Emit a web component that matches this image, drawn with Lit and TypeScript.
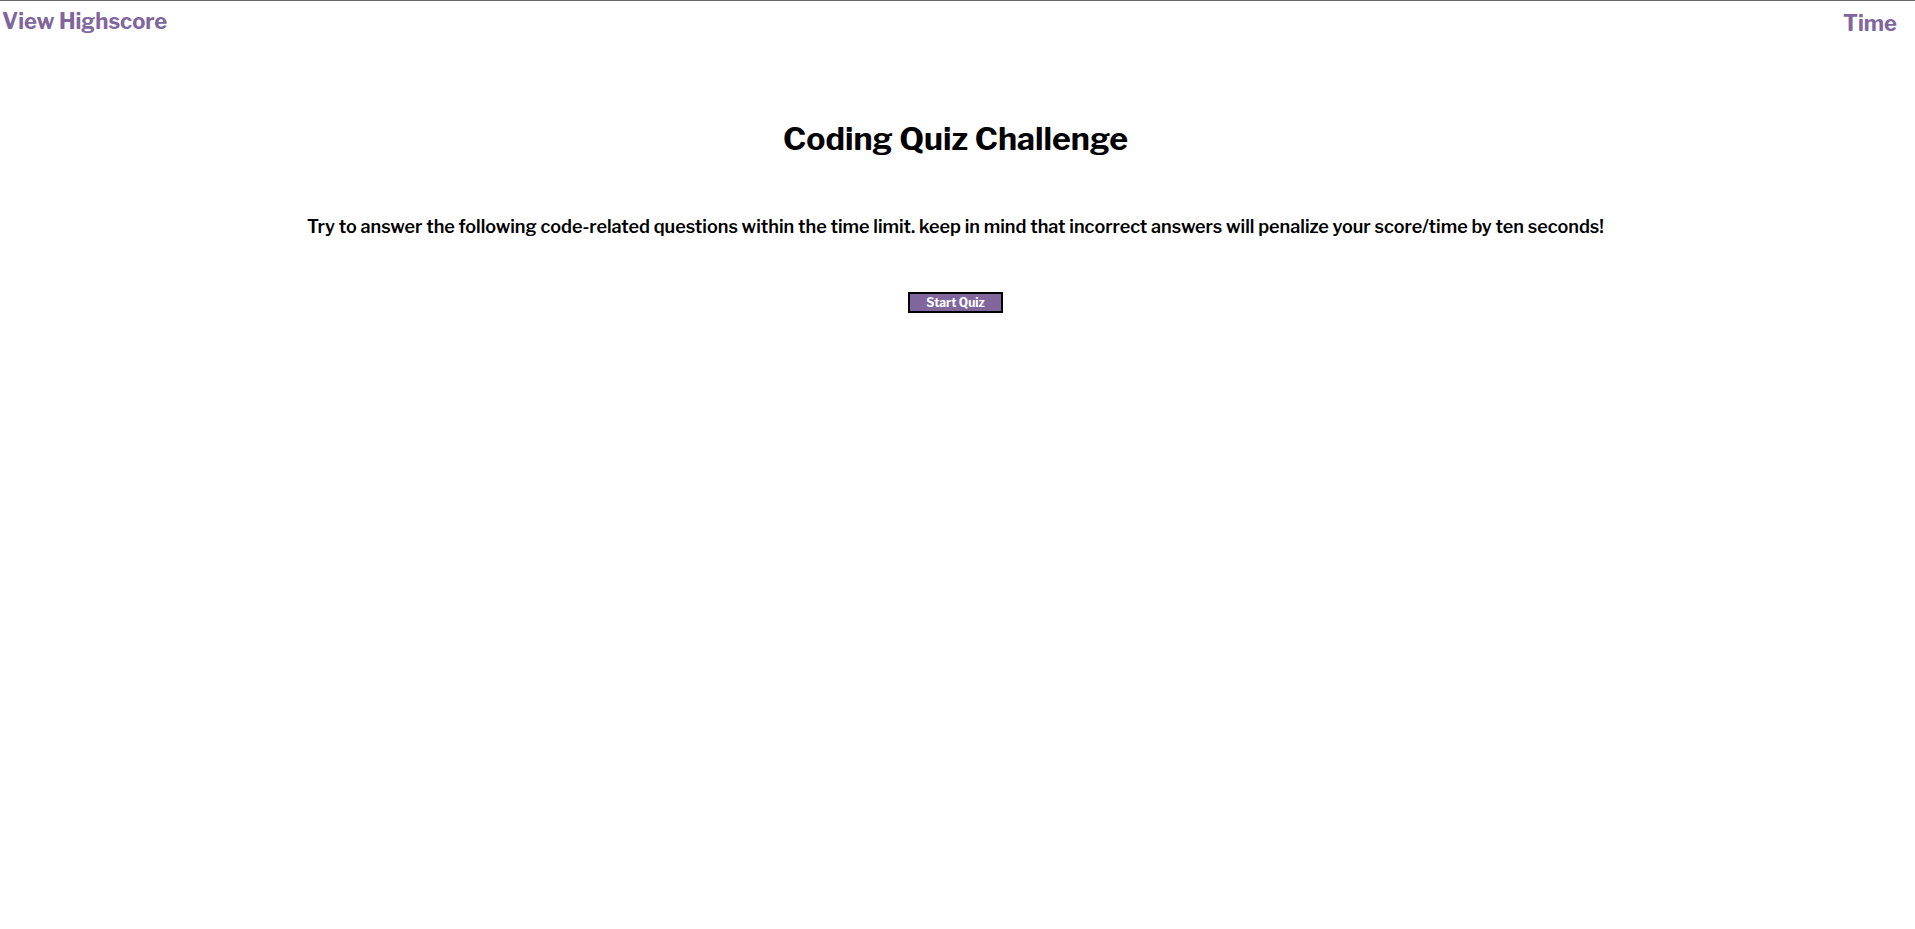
import { LitElement, html, css } from "lit";
import { customElement } from "lit/decorators.js";

@customElement("app-root")
export class AppRoot extends LitElement {
  static styles = css`
    :host {
      display: block;
      border-top: 1px solid #666;
      background: #fff;
      color: #000;
      font-family: "Franklin Gothic Demi", "Libre Franklin", "Liberation Sans", Arial, sans-serif;
      font-weight: 700;
    }
    .bar {
      display: flex;
      justify-content: space-between;
      align-items: flex-start;
      padding: 5px 18px 0 2px;
      font-size: 22px;
      line-height: 30px;
      color: #80669d;
    }
    .link {
      color: inherit;
      text-decoration: none;
    }
    .time {
      padding-top: 2px;
    }
    .intro {
      display: flex;
      flex-direction: column;
      align-items: center;
      padding: 79px 4px 0 0;
      text-align: center;
    }
    .title {
      margin: 0;
      font-size: 32px;
      line-height: 44px;
    }
    .text {
      margin: 54px 0 53px;
      font-size: 18px;
      font-weight: 600;
      line-height: 24px;
    }
    .start {
      padding: 1px 16px;
      border: 2px solid #000;
      background: #80669d;
      color: #fff;
      font: inherit;
      font-size: 12px;
      line-height: 15px;
    }
  `;

  render() {
    return html`
      <header class="bar">
        <a class="link" href="#highscore">View Highscore</a>
        <span class="time">Time</span>
      </header>
      <main class="intro">
        <h1 class="title">Coding Quiz Challenge</h1>
        <p class="text">
          Try to answer the following code-related questions within the time limit. keep in mind that incorrect answers will penalize your score/time by ten seconds!
        </p>
        <button class="start" type="button">Start Quiz</button>
      </main>
    `;
  }
}
